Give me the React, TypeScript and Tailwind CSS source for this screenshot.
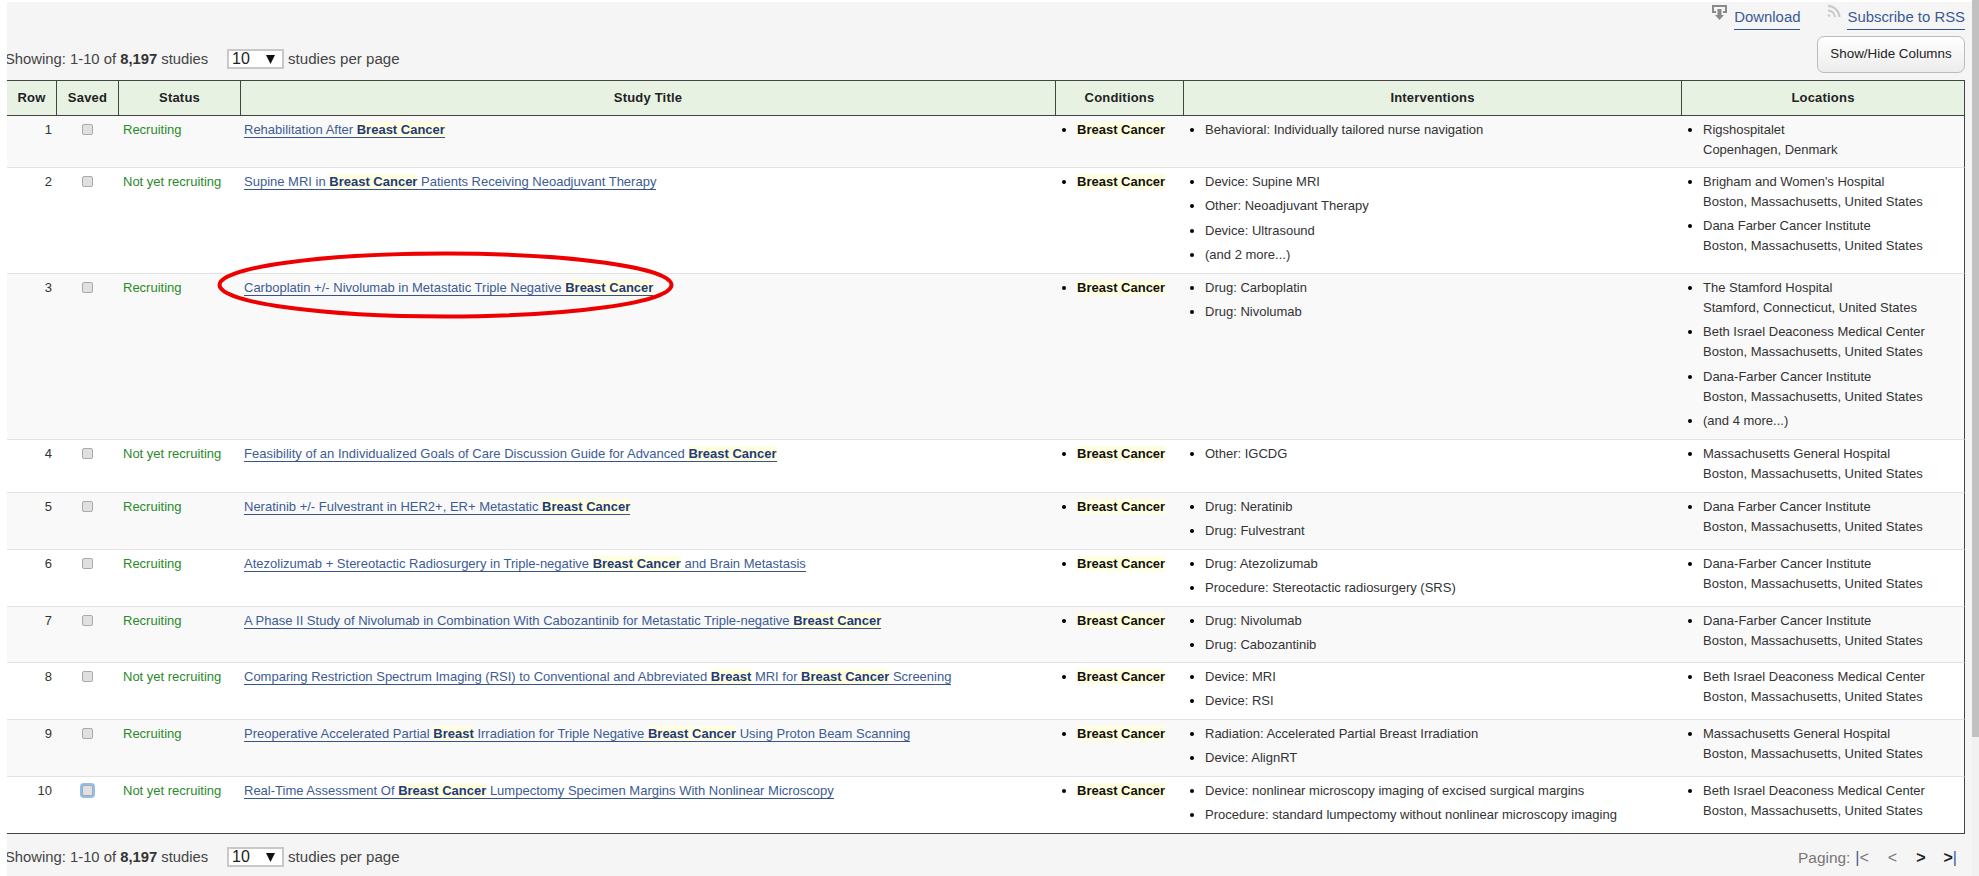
import React from 'react';

interface Study {
  row: number;
  status: string;
  title: [string, boolean][];
  interventions: string[];
  locations: string[][];
  height: string;
  focused?: boolean;
}

const B = 'Breast Cancer';

const studies: Study[] = [
  {
    row: 1,
    status: 'Recruiting',
    title: [['Rehabilitation After ', false], [B, true]],
    interventions: ['Behavioral: Individually tailored nurse navigation'],
    locations: [['Rigshospitalet', 'Copenhagen, Denmark']],
    height: 'h-[52px]',
  },
  {
    row: 2,
    status: 'Not yet recruiting',
    title: [['Supine MRI in ', false], [B, true], [' Patients Receiving Neoadjuvant Therapy', false]],
    interventions: ['Device: Supine MRI', 'Other: Neoadjuvant Therapy', 'Device: Ultrasound', '(and 2 more...)'],
    locations: [
      ["Brigham and Women's Hospital", 'Boston, Massachusetts, United States'],
      ['Dana Farber Cancer Institute', 'Boston, Massachusetts, United States'],
    ],
    height: 'h-[106px]',
  },
  {
    row: 3,
    status: 'Recruiting',
    title: [['Carboplatin +/- Nivolumab in Metastatic Triple Negative ', false], [B, true]],
    interventions: ['Drug: Carboplatin', 'Drug: Nivolumab'],
    locations: [
      ['The Stamford Hospital', 'Stamford, Connecticut, United States'],
      ['Beth Israel Deaconess Medical Center', 'Boston, Massachusetts, United States'],
      ['Dana-Farber Cancer Institute', 'Boston, Massachusetts, United States'],
      ['(and 4 more...)'],
    ],
    height: 'h-[166px]',
  },
  {
    row: 4,
    status: 'Not yet recruiting',
    title: [['Feasibility of an Individualized Goals of Care Discussion Guide for Advanced ', false], [B, true]],
    interventions: ['Other: IGCDG'],
    locations: [['Massachusetts General Hospital', 'Boston, Massachusetts, United States']],
    height: 'h-[53px]',
  },
  {
    row: 5,
    status: 'Recruiting',
    title: [['Neratinib +/- Fulvestrant in HER2+, ER+ Metastatic ', false], [B, true]],
    interventions: ['Drug: Neratinib', 'Drug: Fulvestrant'],
    locations: [['Dana Farber Cancer Institute', 'Boston, Massachusetts, United States']],
    height: 'h-[57px]',
  },
  {
    row: 6,
    status: 'Recruiting',
    title: [['Atezolizumab + Stereotactic Radiosurgery in Triple-negative ', false], [B, true], [' and Brain Metastasis', false]],
    interventions: ['Drug: Atezolizumab', 'Procedure: Stereotactic radiosurgery (SRS)'],
    locations: [['Dana-Farber Cancer Institute', 'Boston, Massachusetts, United States']],
    height: 'h-[57px]',
  },
  {
    row: 7,
    status: 'Recruiting',
    title: [['A Phase II Study of Nivolumab in Combination With Cabozantinib for Metastatic Triple-negative ', false], [B, true]],
    interventions: ['Drug: Nivolumab', 'Drug: Cabozantinib'],
    locations: [['Dana-Farber Cancer Institute', 'Boston, Massachusetts, United States']],
    height: 'h-[56px]',
  },
  {
    row: 8,
    status: 'Not yet recruiting',
    title: [
      ['Comparing Restriction Spectrum Imaging (RSI) to Conventional and Abbreviated ', false],
      ['Breast', true],
      [' MRI for ', false],
      [B, true],
      [' Screening', false],
    ],
    interventions: ['Device: MRI', 'Device: RSI'],
    locations: [['Beth Israel Deaconess Medical Center', 'Boston, Massachusetts, United States']],
    height: 'h-[57px]',
  },
  {
    row: 9,
    status: 'Recruiting',
    title: [
      ['Preoperative Accelerated Partial ', false],
      ['Breast', true],
      [' Irradiation for Triple Negative ', false],
      [B, true],
      [' Using Proton Beam Scanning', false],
    ],
    interventions: ['Radiation: Accelerated Partial Breast Irradiation', 'Device: AlignRT'],
    locations: [['Massachusetts General Hospital', 'Boston, Massachusetts, United States']],
    height: 'h-[57px]',
  },
  {
    row: 10,
    status: 'Not yet recruiting',
    title: [['Real-Time Assessment Of ', false], [B, true], [' Lumpectomy Specimen Margins With Nonlinear Microscopy', false]],
    interventions: ['Device: nonlinear microscopy imaging of excised surgical margins', 'Procedure: standard lumpectomy without nonlinear microscopy imaging'],
    locations: [['Beth Israel Deaconess Medical Center', 'Boston, Massachusetts, United States']],
    height: 'h-[57px]',
    focused: true,
  },
];

const headers = ['Row', 'Saved', 'Status', 'Study Title', 'Conditions', 'Interventions', 'Locations'];

function PerPage() {
  return (
    <div className="flex items-center text-[14.8px] text-[#444]">
      <span className="-ml-[2px] w-[222px]">
        Showing: 1-10 of <b className="text-[#333]">8,197</b> studies
      </span>
      <div className="flex h-[20px] w-[57px] items-center justify-between border-2 border-[#c8c8c8] bg-white pr-[7px] pl-[3px] text-[16px] text-[#222]">
        <span>10</span>
        <svg width="9" height="9" viewBox="0 0 9 9" fill="#111">
          <path d="M0 0h9L4.500 9z" />
        </svg>
      </div>
      <span className="ml-[4px] text-[15.1px]">studies per page</span>
    </div>
  );
}

function Bullets({ items }: { items: React.ReactNode[] }) {
  return (
    <ul className="list-disc pl-[21px] marker:text-black">
      {items.map((item, i) => (
        <li key={i} className="mb-[4.4px] leading-[20px]">
          {item}
        </li>
      ))}
    </ul>
  );
}

export default function App() {
  return (
    <div className="h-[876px] w-[1979px] overflow-hidden bg-white font-['Liberation_Sans',Arial,sans-serif]">
      <div className="flex h-full">
        <div className="relative mt-[2px] ml-[7px] w-[1965px] overflow-hidden bg-[#f5f5f5]">
          <div className="flex h-[78px] justify-between pr-[7px]">
            <div className="pt-[46px]">
              <PerPage />
            </div>
            <div className="flex flex-col items-end">
              <div className="flex h-[28px] items-start text-[14.9px] text-[#3a5a94]">
                <svg width="15" height="15" viewBox="0 0 15 15" className="mt-[3px] mr-[7px]" fill="#8a8a8a">
                  <path d="M0 0h15v8h-4V6h2V2H2v4h2v2H0z" />
                  <path d="M5.500 4h4v6H12l-4.500 5L3 10h2.500z" />
                </svg>
                <span className="mt-[6px] border-b border-[#34548a] pb-[3px] leading-[18px]">Download</span>
                <svg width="15" height="15" viewBox="0 0 15 15" className="mt-[2px] ml-[26px] mr-[6px]" fill="none" stroke="#c8c8c8" strokeWidth="2">
                  <circle cx="3" cy="11.500" r="1.300" fill="#c8c8c8" stroke="none" />
                  <path d="M2 6.500a7 7 0 0 1 7 6.500" />
                  <path d="M2 2a11.500 11.500 0 0 1 11.500 11" />
                </svg>
                <span className="mt-[6px] border-b border-[#34548a] pb-[3px] leading-[18px]">Subscribe to RSS</span>
              </div>
              <button className="mt-[6px] h-[37px] w-[148px] rounded-[7px] border border-[#bbb] bg-gradient-to-b from-white to-[#ececec] text-[13.4px] text-[#222]">
                Show/Hide Columns
              </button>
            </div>
          </div>

          <table className="w-[1958px] table-fixed border-separate border-spacing-0 text-[13px] text-[#333]">
            <colgroup>
              <col className="w-[50px]" />
              <col className="w-[62px]" />
              <col className="w-[122px]" />
              <col className="w-[815px]" />
              <col className="w-[128px]" />
              <col className="w-[498px]" />
              <col className="w-[283px]" />
            </colgroup>
            <thead>
              <tr>
                {headers.map((h) => (
                  <th
                    key={h}
                    className="h-[36px] border-y border-r border-[#444] bg-[#e8f2e3] text-center text-[13px] font-bold tracking-[0.2px] text-[#222]"
                  >
                    {h}
                  </th>
                ))}
              </tr>
            </thead>
            <tbody>
              {studies.map((s, idx) => {
                const bg = idx % 2 === 0 ? 'bg-[#f9f9f9]' : 'bg-white';
                const last = idx === studies.length - 1;
                const edge = last ? 'border-b border-[#444]' : 'border-b border-[#e2e2e2]';
                const td = `${s.height} ${bg} ${edge} align-top`;
                return (
                  <tr key={s.row}>
                    <td className={`${td} pt-[4px] pr-[5px] text-right leading-[20px]`}>{s.row}</td>
                    <td className={`${td} pt-[4px] text-center leading-[20px]`}>
                      <input
                        type="checkbox"
                        readOnly
                        className={`mt-[4px] block h-[11px] w-[11px] translate-x-[25px] appearance-none rounded-[2px] border border-[#aaa] bg-[#e0e0e0] ${s.focused ? 'shadow-[0_0_0_2px_#8fbdf0]' : ''}`}
                      />
                    </td>
                    <td className={`${td} pt-[4px] pl-[4px] leading-[20px] text-[#2a8a2a]`}>{s.status}</td>
                    <td className={`${td} pt-[4px] pl-[3px] leading-[20px] text-[#3d5c94]`}>
                      <a className="border-b border-[#34548a]">
                        {s.title.map(([t, hit], i) =>
                          hit ? (
                            <b key={i} className="bg-[#ffffe0] text-[#1f3a78]">
                              {t}
                            </b>
                          ) : (
                            <span key={i}>{t}</span>
                          ),
                        )}
                      </a>
                    </td>
                    <td className={`${td} pt-[4px]`}>
                      <Bullets items={[<b className="bg-[#ffffe0] text-[#111]">{B}</b>]} />
                    </td>
                    <td className={`${td} pt-[4px]`}>
                      <Bullets items={s.interventions} />
                    </td>
                    <td className={`${td} border-r border-r-[#444] pt-[4px]`}>
                      <Bullets
                        items={s.locations.map((lines) => (
                          <>
                            {lines.map((l) => (
                              <div key={l}>{l}</div>
                            ))}
                          </>
                        ))}
                      />
                    </td>
                  </tr>
                );
              })}
            </tbody>
          </table>

          <div className="flex h-[41px] items-center justify-between pr-[15px] pt-[6px]">
            <PerPage />
            <div className="flex items-center text-[15.4px] text-[#777]">
              <span>Paging:</span>
              <span className="ml-[5px] text-[16px]">
                <span className="text-[#3a5a94]">|</span>&lt;
              </span>
              <span className="ml-[19px] text-[16px]">&lt;</span>
              <b className="ml-[19px] text-[16px] text-[#222]">&gt;</b>
              <b className="ml-[18px] text-[16px] text-[#222]">
                &gt;<span className="font-normal text-[#3a5a94]">|</span>
              </b>
            </div>
          </div>

          <svg width="470" height="74" viewBox="0 0 470 74" className="pointer-events-none absolute left-[204px] top-[246px]" fill="none">
            <ellipse cx="234.500" cy="37" rx="226" ry="31.500" stroke="#ee0000" strokeWidth="4" />
          </svg>
        </div>
        <div className="relative h-full w-[7px] bg-[#f1f1f1]">
          <div className="h-[737px] w-full bg-[#c1c1c1]" />
        </div>
      </div>
    </div>
  );
}
